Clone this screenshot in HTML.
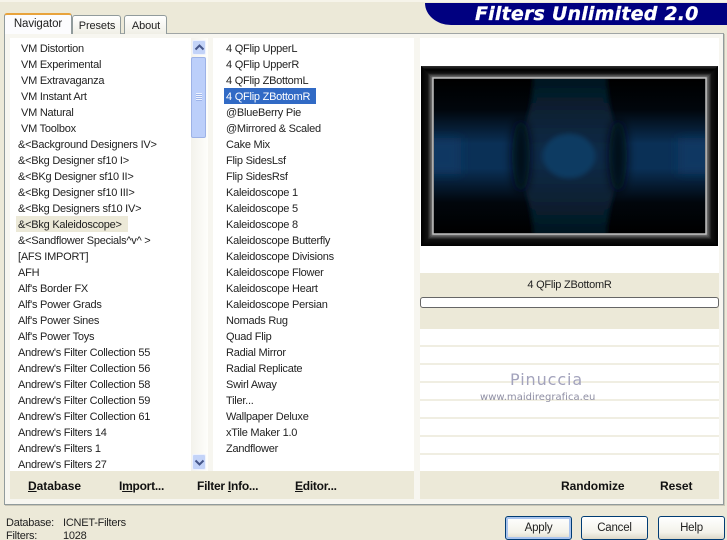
<!DOCTYPE html>
<html><head><meta charset="utf-8"><style>
html,body{margin:0;padding:0;background:#ece9d8}
#r{position:relative;width:727px;height:540px;overflow:hidden;background:#ece9d8;font-family:"Liberation Sans",sans-serif;font-size:11px;letter-spacing:-.24px;color:#222}
#r div{position:absolute;box-sizing:border-box}
.t{white-space:nowrap;line-height:16px;height:16px;margin-top:1px}
.b{font-weight:bold;font-size:12px;white-space:nowrap;line-height:16px;color:#111;letter-spacing:-.05px}
.btn{top:516px;width:67px;height:24px;border:1px solid #003c74;border-radius:3px;background:linear-gradient(#fff,#f3f2ea 70%,#dcd8c8);text-align:center;line-height:23px;font-size:11.5px;letter-spacing:-.2px}
.ln{left:420px;width:299px;height:2px;background:#f0eee2}
.tab{border:1px solid #919b9c;border-bottom:none;border-radius:3px 3px 0 0;background:linear-gradient(#fff,#f0efe6);text-align:center;line-height:18px;font-size:11px;letter-spacing:-.1px}
</style></head><body><div id="r">
<div style="left:0;top:0;width:727px;height:2px;background:#f6f4ea"></div>
<div style="left:425px;top:3px;width:302px;height:22px;background:#000080;border-radius:0 0 0 26px/0 0 0 22px"></div>
<div style="left:475px;top:3px;height:22px;line-height:23px;color:#fff;font-family:'DejaVu Sans',sans-serif;font-weight:bold;font-style:italic;font-size:19px;white-space:nowrap;letter-spacing:.2px;-webkit-text-stroke:.3px #fff">Filters Unlimited 2.0</div>

<div style="left:4px;top:33px;width:720px;height:472px;background:#f7f6f0;border:1px solid #919b9c;border-top-color:#a0a5a5;box-shadow:1px 1px 0 #c9c6b6"></div>
<div class="tab" style="left:72px;top:15px;width:49px;height:19px;padding-top:1px;padding-left:1px">Presets</div>
<div class="tab" style="left:124px;top:15px;width:43px;height:19px;padding-top:1px;padding-left:1px">About</div>
<div class="tab" style="left:4px;top:13px;width:68px;height:21px;background:#fcfcfe;border-bottom:none;z-index:2;line-height:19px;border-top:2px solid #e8a33c;font-size:11.5px">Navigator</div>

<div style="left:10px;top:38px;width:181px;height:433px;background:#fff"></div>
<div style="left:191px;top:38px;width:17px;height:433px;background:linear-gradient(90deg,#f3f2ec,#fefefb)"></div>
<div style="left:192px;top:40px;width:14px;height:15px;background:#c3d3f8;border:1px solid #eef2fd;border-radius:2px"></div>
<svg style="position:absolute;left:194px;top:44px" width="11" height="7"><path d="M1.5 5.5 L5.5 1.5 L9.5 5.5" fill="none" stroke="#45568a" stroke-width="2"/></svg>
<div style="left:191px;top:57px;width:15px;height:81px;background:#bccffa;border:1px solid #9db2e6;border-radius:2px"></div>
<div style="left:196px;top:93px;width:6px;height:8px;background:repeating-linear-gradient(#eef3ff 0 1px,#9db4ea 1px 2px)"></div>
<div style="left:192px;top:454px;width:14px;height:16px;background:#c3d3f8;border:1px solid #eef2fd;border-radius:2px"></div>
<svg style="position:absolute;left:194px;top:459px" width="11" height="7"><path d="M1.5 1.5 L5.5 5.5 L9.5 1.5" fill="none" stroke="#45568a" stroke-width="2"/></svg>
<div style="left:213px;top:38px;width:201px;height:433px;background:#fff"></div>

<div style="left:16px;top:216px;width:112px;height:16px;background:#ece9d8"></div>
<div class="t" style="left:21px;top:40px">VM Distortion</div>
<div class="t" style="left:21px;top:56px">VM Experimental</div>
<div class="t" style="left:21px;top:72px">VM Extravaganza</div>
<div class="t" style="left:21px;top:88px">VM Instant Art</div>
<div class="t" style="left:21px;top:104px">VM Natural</div>
<div class="t" style="left:21px;top:120px">VM Toolbox</div>
<div class="t" style="left:18px;top:136px">&amp;&lt;Background Designers IV&gt;</div>
<div class="t" style="left:18px;top:152px">&amp;&lt;Bkg Designer sf10 I&gt;</div>
<div class="t" style="left:18px;top:168px">&amp;&lt;BKg Designer sf10 II&gt;</div>
<div class="t" style="left:18px;top:184px">&amp;&lt;Bkg Designer sf10 III&gt;</div>
<div class="t" style="left:18px;top:200px">&amp;&lt;Bkg Designers sf10 IV&gt;</div>
<div class="t" style="left:18px;top:216px">&amp;&lt;Bkg Kaleidoscope&gt;</div>
<div class="t" style="left:18px;top:232px">&amp;&lt;Sandflower Specials^v^ &gt;</div>
<div class="t" style="left:18px;top:248px">[AFS IMPORT]</div>
<div class="t" style="left:18px;top:264px">AFH</div>
<div class="t" style="left:18px;top:280px">Alf's Border FX</div>
<div class="t" style="left:18px;top:296px">Alf's Power Grads</div>
<div class="t" style="left:18px;top:312px">Alf's Power Sines</div>
<div class="t" style="left:18px;top:328px">Alf's Power Toys</div>
<div class="t" style="left:18px;top:344px">Andrew's Filter Collection 55</div>
<div class="t" style="left:18px;top:360px">Andrew's Filter Collection 56</div>
<div class="t" style="left:18px;top:376px">Andrew's Filter Collection 58</div>
<div class="t" style="left:18px;top:392px">Andrew's Filter Collection 59</div>
<div class="t" style="left:18px;top:408px">Andrew's Filter Collection 61</div>
<div class="t" style="left:18px;top:424px">Andrew's Filters 14</div>
<div class="t" style="left:18px;top:440px">Andrew's Filters 1</div>
<div class="t" style="left:18px;top:456px">Andrew's Filters 27</div>

<div style="left:224px;top:88px;width:92px;height:16px;background:#316ac5"></div>
<div class="t" style="left:226px;top:40px">4 QFlip UpperL</div>
<div class="t" style="left:226px;top:56px">4 QFlip UpperR</div>
<div class="t" style="left:226px;top:72px">4 QFlip ZBottomL</div>
<div class="t" style="left:226px;top:88px;color:#fff">4 QFlip ZBottomR</div>
<div class="t" style="left:226px;top:104px">@BlueBerry Pie</div>
<div class="t" style="left:226px;top:120px">@Mirrored &amp; Scaled</div>
<div class="t" style="left:226px;top:136px">Cake Mix</div>
<div class="t" style="left:226px;top:152px">Flip SidesLsf</div>
<div class="t" style="left:226px;top:168px">Flip SidesRsf</div>
<div class="t" style="left:226px;top:184px">Kaleidoscope 1</div>
<div class="t" style="left:226px;top:200px">Kaleidoscope 5</div>
<div class="t" style="left:226px;top:216px">Kaleidoscope 8</div>
<div class="t" style="left:226px;top:232px">Kaleidoscope Butterfly</div>
<div class="t" style="left:226px;top:248px">Kaleidoscope Divisions</div>
<div class="t" style="left:226px;top:264px">Kaleidoscope Flower</div>
<div class="t" style="left:226px;top:280px">Kaleidoscope Heart</div>
<div class="t" style="left:226px;top:296px">Kaleidoscope Persian</div>
<div class="t" style="left:226px;top:312px">Nomads Rug</div>
<div class="t" style="left:226px;top:328px">Quad Flip</div>
<div class="t" style="left:226px;top:344px">Radial Mirror</div>
<div class="t" style="left:226px;top:360px">Radial Replicate</div>
<div class="t" style="left:226px;top:376px">Swirl Away</div>
<div class="t" style="left:226px;top:392px">Tiler...</div>
<div class="t" style="left:226px;top:408px">Wallpaper Deluxe</div>
<div class="t" style="left:226px;top:424px">xTile Maker 1.0</div>
<div class="t" style="left:226px;top:440px">Zandflower</div>

<div style="left:10px;top:471px;width:404px;height:28px;background:#ece9d8"></div>
<div class="b" style="left:28px;top:478px"><u>D</u>atabase</div>
<div class="b" style="left:119px;top:478px;letter-spacing:-.25px">I<u>m</u>port...</div>
<div class="b" style="left:197px;top:478px;letter-spacing:-.25px">Filter <u>I</u>nfo...</div>
<div class="b" style="left:295px;top:478px;letter-spacing:-.25px"><u>E</u>ditor...</div>

<div style="left:420px;top:38px;width:299px;height:433px;background:#fff"></div>
<svg style="position:absolute;left:421px;top:66px" width="297" height="180" viewBox="0 0 297 180">
<defs>
<filter id="bl" x="-10%" y="-10%" width="120%" height="120%"><feGaussianBlur stdDeviation="2.5"/></filter>
<filter id="bl2" x="-30%" y="-30%" width="160%" height="160%"><feGaussianBlur stdDeviation="5"/></filter>
<clipPath id="in"><rect x="13" y="13" width="271" height="154"/></clipPath>
<linearGradient id="v" x1="0" y1="0" x2="0" y2="1"><stop offset="0" stop-color="#000"/><stop offset=".2" stop-color="#01060c"/><stop offset=".42" stop-color="#0a3056"/><stop offset=".58" stop-color="#0a3056"/><stop offset=".8" stop-color="#01060c"/><stop offset="1" stop-color="#000"/></linearGradient>
<linearGradient id="c" x1="0" y1="0" x2="0" y2="1"><stop offset="0" stop-color="#05161f"/><stop offset=".5" stop-color="#0a2c4a"/><stop offset="1" stop-color="#05161f"/></linearGradient>
<linearGradient id="ft" x1="0" y1="0" x2="0" y2="1"><stop offset="0" stop-color="#333"/><stop offset=".3" stop-color="#000"/><stop offset=".6" stop-color="#111"/><stop offset="1" stop-color="#888"/></linearGradient>
<linearGradient id="fb" x1="0" y1="1" x2="0" y2="0"><stop offset="0" stop-color="#000"/><stop offset=".55" stop-color="#111"/><stop offset="1" stop-color="#888"/></linearGradient>
<linearGradient id="fl" x1="0" y1="0" x2="1" y2="0"><stop offset="0" stop-color="#000"/><stop offset=".55" stop-color="#111"/><stop offset="1" stop-color="#888"/></linearGradient>
<linearGradient id="fr" x1="1" y1="0" x2="0" y2="0"><stop offset="0" stop-color="#000"/><stop offset=".55" stop-color="#111"/><stop offset="1" stop-color="#888"/></linearGradient>
</defs>
<rect width="297" height="180" fill="#000"/>
<path d="M0 0H297L285 12H12Z" fill="url(#ft)"/>
<path d="M0 180H297L285 168H12Z" fill="url(#fb)"/>
<path d="M0 0V180L12 168V12Z" fill="url(#fl)"/>
<path d="M297 0V180L285 168V12Z" fill="url(#fr)"/>
<rect x="12" y="12" width="273" height="156" fill="none" stroke="#c0c0c0" stroke-width="1.5"/>
<rect x="13" y="13" width="271" height="154" fill="url(#v)"/>
<g clip-path="url(#in)"><g filter="url(#bl)">
<path d="M112 10 H186 C186 40 194 55 196 72 C190 80 190 100 196 108 C194 130 186 145 186 170 H112 C112 145 104 130 102 108 C108 100 108 80 102 72 C104 55 112 40 112 10Z" fill="url(#c)"/>
<ellipse cx="148" cy="90" rx="26" ry="22" fill="#0e3a62"/>
</g><g filter="url(#bl2)">
<ellipse cx="100" cy="90" rx="9" ry="36" fill="#040a14"/>
<ellipse cx="197" cy="90" rx="9" ry="36" fill="#040a14"/>
<rect x="5" y="72" width="35" height="36" fill="#0b3c6a" opacity=".6"/>
<rect x="257" y="72" width="35" height="36" fill="#0b3c6a" opacity=".6"/>
</g></g>
</svg>

<div style="left:420px;top:273px;width:299px;height:56px;background:#ece9d8"></div>
<div style="left:420px;top:277px;width:299px;text-align:center;line-height:16px">4 QFlip ZBottomR</div>
<div style="left:420px;top:297px;width:299px;height:11px;background:#fff;border:1px solid #666;border-radius:3px"></div>
<div class="ln" style="top:345px"></div>
<div class="ln" style="top:363px"></div>
<div class="ln" style="top:381px"></div>
<div class="ln" style="top:399px"></div>
<div class="ln" style="top:417px"></div>
<div class="ln" style="top:435px"></div>
<div class="ln" style="top:453px"></div>
<div style="left:420px;top:471px;width:299px;height:28px;background:#ece9d8"></div>
<div class="b" style="left:561px;top:478px">Randomize</div>
<div class="b" style="left:660px;top:478px">Reset</div>

<div style="left:510px;top:370px;font-family:'DejaVu Sans',sans-serif;font-size:16px;line-height:20px;color:#a3a3bc;letter-spacing:.9px;white-space:nowrap">Pinuccia</div>
<div style="left:480px;top:391px;font-family:'DejaVu Sans',sans-serif;font-size:10px;line-height:13px;color:#8f8fa4;letter-spacing:.03px;white-space:nowrap">www.maidiregrafica.eu</div>

<div class="t" style="left:6px;top:514px">Database:</div>
<div class="t" style="left:63px;top:514px">ICNET-Filters</div>
<div class="t" style="left:6px;top:527px">Filters:</div>
<div class="t" style="left:63px;top:527px">1028</div>

<div class="btn" style="left:505px;box-shadow:inset 0 0 0 2px #a9c4ee">Apply</div>
<div class="btn" style="left:581px">Cancel</div>
<div class="btn" style="left:658px">Help</div>
</div></body></html>
